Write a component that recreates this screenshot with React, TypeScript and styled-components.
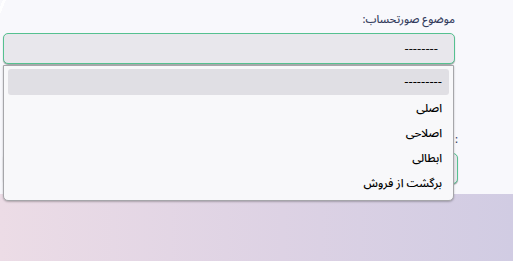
import React from "react";
import styled, { createGlobalStyle } from "styled-components";

const Global = createGlobalStyle`
  html, body { margin: 0; padding: 0; }
  body {
    width: 513px;
    height: 261px;
    overflow: hidden;
    background: linear-gradient(90deg, #ecdce6 0%, #ddd2e4 55%, #d1cce3 100%);
    font-family: "Noto Sans Arabic", "DejaVu Sans", sans-serif;
  }
`;

const Panel = styled.div`
  position: relative;
  height: 194px;
  box-sizing: border-box;
  background:
    linear-gradient(112deg, transparent 0 4%, rgba(255,255,255,0.9) 4% 8%, transparent 8%) no-repeat 0 0 / 60px 30px,
    #f8f8fc;
  direction: rtl;
  padding: 12px 58px 0 3px;
`;

const Field = styled.div<{ $gap?: number; $shift?: number }>`
  display: flex;
  flex-direction: column;
  margin-bottom: ${(p) => p.$gap ?? 0}px;
  margin-right: ${(p) => -(p.$shift ?? 0)}px;
`;

const Label = styled.label`
  font-size: 11px;
  line-height: 16px;
  font-weight: 500;
  color: #343d5e;
  margin-bottom: 5px;
`;

const SelectBox = styled.div`
  height: 31px;
  box-sizing: border-box;
  background: #e8e7ec;
  border: 1px solid #55c190;
  border-radius: 5px;
  box-shadow: 0 1px 1px rgba(0,0,0,0.35);
  display: flex;
  align-items: center;
  padding-right: 16px;
  font-size: 13px;
  color: #111;
`;

const Dropdown = styled.div`
  position: absolute;
  top: 65px;
  left: 3px;
  width: 451px;
  height: 136px;
  box-sizing: border-box;
  background: #f8f8fa;
  border: 1px solid #a6a6aa;
  border-radius: 0 0 5px 5px;
  box-shadow: 0 1px 2px rgba(0,0,0,0.25);
  padding: 3px 4px 5px;
  direction: rtl;
  display: flex;
  flex-direction: column;
`;

const Option = styled.div<{ $active?: boolean }>`
  height: ${(p) => (p.$active ? 26 : 25)}px;
  display: flex;
  align-items: center;
  padding-right: 7px;
  font-size: ${(p) => (p.$active ? 13 : 11.5)}px;
  font-weight: ${(p) => (p.$active ? 400 : 500)};
  color: #000;
  border-radius: 3px;
  background: ${(p) => (p.$active ? "#e0dfe4" : "transparent")};
`;

const options = ["---------", "اصلی", "اصلاحی", "ابطالی", "برگشت از فروش"];

export default function App() {
  return (
    <>
      <Global />
      <Panel>
        <Field $gap={68}>
          <Label>موضوع صورتحساب:</Label>
          <SelectBox>--------</SelectBox>
        </Field>
        <Field $shift={3}>
          <Label>:</Label>
          <SelectBox>--------</SelectBox>
        </Field>
        <Dropdown>
          {options.map((o, i) => (
            <Option key={o} $active={i === 0}>
              {o}
            </Option>
          ))}
        </Dropdown>
      </Panel>
    </>
  );
}
